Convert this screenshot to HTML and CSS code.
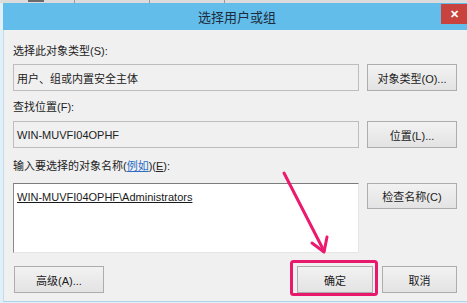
FILE: index.html
```html
<!DOCTYPE html>
<html lang="zh-CN">
<head>
  <meta charset="UTF-8">
  <title>选择用户或组</title>
  <link rel="stylesheet" href="styles.css">
</head>
<body>

<div class="behind">
  <span class="tab"><i class="blot"></i></span>
  <span class="tab"></span>
  <span class="tab"></span>
</div>

<div class="window">
  <div class="titlebar">
    <span></span>
    <span class="title">选择用户或组</span>
    <span class="close">✕</span>
  </div>

  <div class="content">
    <div class="label first">选择此对象类型(S):</div>
    <div class="row">
      <div class="field readonly">用户、组或内置安全主体</div>
      <div class="btn">对象类型(O)...</div>
    </div>

    <div class="label second">查找位置(F):</div>
    <div class="row">
      <div class="field readonly">WIN-MUVFI04OPHF</div>
      <div class="btn">位置(L)...</div>
    </div>

    <div class="label third">输入要选择的对象名称(<a class="link">例如</a>)(<u>E</u>):</div>
    <div class="row names">
      <div class="field input"><u>WIN-MUVFI04OPHF\Administrators</u></div>
      <div class="btn">检查名称(C)</div>
    </div>

    <div class="bottom">
      <div class="btn wide">高级(A)...</div>
      <div class="actions">
        <div class="btn ok">确定</div>
        <div class="btn cancel">取消</div>
      </div>
    </div>
  </div>
</div>

<!-- red annotation drawn over the dialog -->
<svg class="mark" width="467" height="303" viewBox="0 0 467 303">
  <rect x="291.5" y="261.5" width="85" height="33" rx="2" fill="none" stroke="#e8196d" stroke-width="3"/>
  <path d="M284 173 L324 251" stroke="#ec1a6e" stroke-width="3" fill="none" stroke-linecap="round"/>
  <path d="M312 243 L324 252 L327 237" stroke="#ec1a6e" stroke-width="3" fill="none" stroke-linecap="round" stroke-linejoin="round"/>
</svg>

</body>
</html>
```

FILE: styles.css
```css
body {
  margin: 0;
  padding: 0;
  width: 467px;
  height: 303px;
  overflow: hidden;
  background: #dff0f8;
  font-family: "Liberation Sans", "Noto Sans CJK SC", sans-serif;
  font-size: 11px;
  color: #222;
  position: relative;
}

.behind {
  height: 3px;
  background: #dcdcdc;
  display: flex;
  overflow: hidden;
}

.behind .tab {
  width: 75px;
  border-right: 1px solid #9a9a9a;
  padding-left: 28px;
  box-sizing: border-box;
}

.blot {
  display: block;
  width: 16px;
  height: 2px;
  background: #6a6a6a;
}

.window {
  margin-left: 3px;
  border-left: 1px solid #c6dbe8;
  border-bottom: 1px solid #a9d4ec;
  background: #f0f0f0;
}

.titlebar {
  height: 27px;
  background: #63bdeb;
  display: grid;
  grid-template-columns: 1fr auto 1fr;
  align-items: center;
  margin-left: -1px;
}

.title {
  font-size: 13px;
  color: #1c2c3c;
  padding-left: 4px;
}

.close {
  justify-self: end;
  align-self: start;
  margin-top: 1px;
  width: 26px;
  height: 20px;
  background: #c8433d;
  color: #fff;
  font-size: 11px;
  font-weight: bold;
  display: flex;
  align-items: center;
  justify-content: center;
}

.content {
  padding: 13px 10px 8px 9px;
}

.label {
  line-height: 16px;
  height: 16px;
  margin-bottom: 5px;
}

.label.second {
  margin-top: 8px;
  margin-bottom: 6px;
}

.label.third {
  margin-top: 10px;
  margin-bottom: 9px;
}

.link {
  color: #2a6cc4;
  text-decoration: underline;
}

.row {
  display: flex;
  gap: 8px;
  align-items: flex-start;
}

.field {
  flex: 1;
  box-sizing: border-box;
  height: 27px;
  padding: 0 3px;
  display: flex;
  align-items: center;
}

.field.readonly {
  background: #f0f0f0;
  border: 1px solid #bdbdbd;
}

.field.input {
  height: 70px;
  align-items: flex-start;
  padding-top: 7px;
  background: #fff;
  border: 1px solid;
  border-color: #7d7d7d #e6e6e6 #e6e6e6 #8a8a8a;
  color: #1a1a1a;
}

.btn {
  box-sizing: border-box;
  width: 90px;
  height: 27px;
  border: 1px solid #adadad;
  background: linear-gradient(#f2f2f2, #e3e3e3);
  display: flex;
  align-items: center;
  justify-content: center;
  color: #1a1a1a;
}

.names .btn {
  height: 26px;
}

.bottom {
  margin-top: 13px;
  display: flex;
  justify-content: space-between;
}

.btn.wide {
  margin-left: 1px;
}

.actions {
  display: flex;
  gap: 9px;
}

.btn.ok {
  width: 76px;
}

.btn.cancel {
  width: 75px;
}

.mark {
  position: absolute;
  left: 0;
  top: 0;
  pointer-events: none;
}
```
